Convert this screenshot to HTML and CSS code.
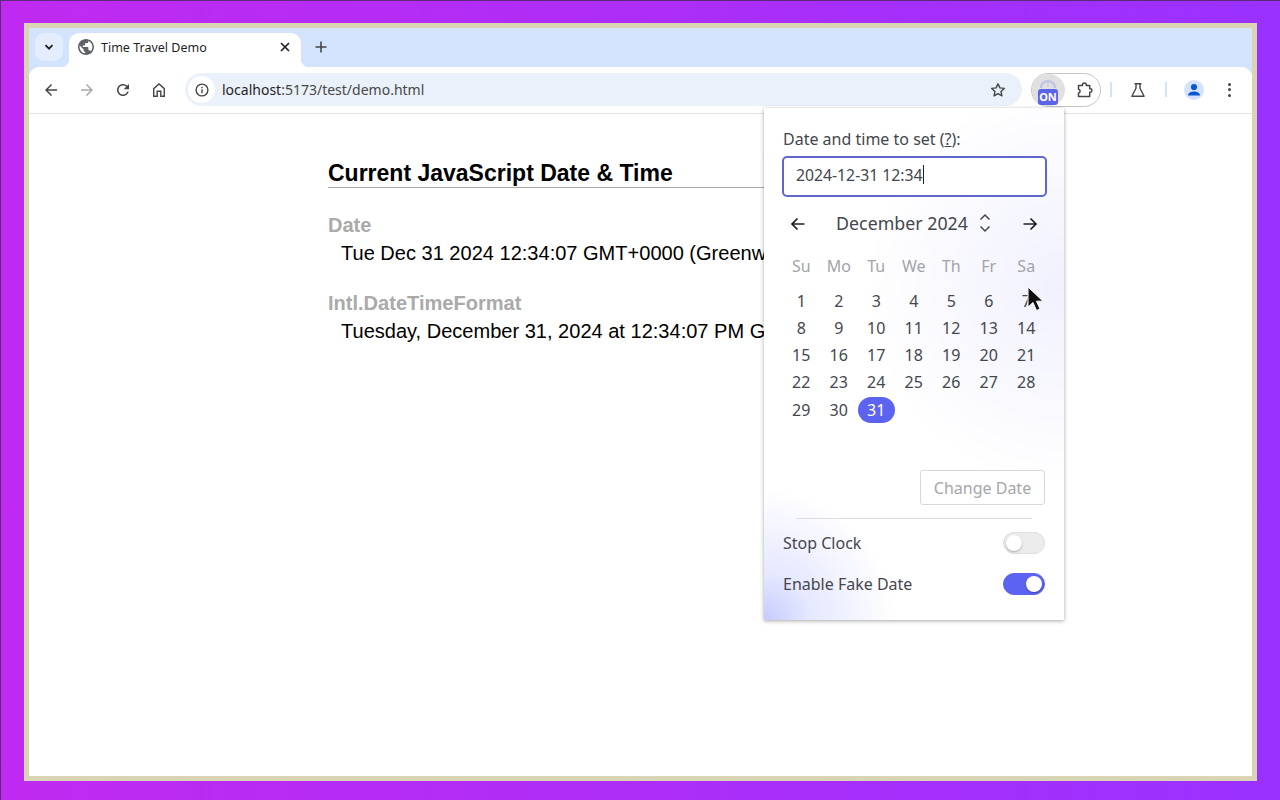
FILE: index.html
```html
<!DOCTYPE html>
<html lang="en">
<head>
    <meta charset="UTF-8">
    <meta name="viewport" content="width=device-width, initial-scale=1.0">
    <title>Time Travel Demo</title>
    <link rel="stylesheet" href="styles.css">
</head>
<body>
    <div class="window">
        <div class="tabstrip">
            <button class="tab-search">
                <svg width="12" height="12" viewBox="0 0 12 12"><path d="M2.5 4.2 6 7.7l3.500-3.500" fill="none" stroke="#1f1f1f" stroke-width="1.800"/></svg>
            </button>
            <div class="tab">
                <svg class="favicon" width="16" height="16" viewBox="2 2 20 20"><path fill="#5f6368" d="M12 2C6.480 2 2 6.480 2 12s4.480 10 10 10 10-4.480 10-10S17.520 2 12 2zm-1 17.930c-3.950-.490-7-3.850-7-7.930 0-.620.080-1.210.210-1.790L9 15v1c0 1.100.900 2 2 2v1.930zm6.900-2.540c-.260-.810-1-1.390-1.900-1.390h-1v-3c0-.550-.450-1-1-1H8v-2h2c.550 0 1-.450 1-1V7h2c1.100 0 2-.900 2-2v-.410c2.930 1.190 5 4.060 5 7.410 0 2.080-.800 3.970-2.100 5.390z"/></svg>
                <span class="tab-title">Time Travel Demo</span>
                <svg class="tab-close" width="10" height="10" viewBox="0 0 10 10"><path d="M1 1l8 8M9 1l-8 8" stroke="#1f1f1f" stroke-width="1.700"/></svg>
            </div>
            <svg class="new-tab" width="12" height="12" viewBox="0 0 12 12"><path d="M6 .500v11M.500 6h11" stroke="#444746" stroke-width="1.600"/></svg>
        </div>

        <div class="toolbar">
            <div class="nav-btn">
                <svg width="18" height="18" viewBox="0 0 24 24"><path fill="#444746" d="M20 11H7.830l5.590-5.590L12 4l-8 8 8 8 1.410-1.410L7.830 13H20v-2z"/></svg>
            </div>
            <div class="nav-btn">
                <svg width="18" height="18" viewBox="0 0 24 24"><path fill="#a8a9aa" d="M4 11h12.170l-5.590-5.590L12 4l8 8-8 8-1.410-1.410L16.170 13H4v-2z"/></svg>
            </div>
            <div class="nav-btn">
                <svg width="18" height="18" viewBox="0 0 24 24"><path fill="#444746" d="M17.650 6.350A7.958 7.958 0 0 0 12 4c-4.420 0-7.990 3.580-7.990 8s3.570 8 7.990 8c3.730 0 6.840-2.550 7.730-6h-2.080A5.990 5.990 0 0 1 12 18c-3.310 0-6-2.690-6-6s2.690-6 6-6c1.660 0 3.140.690 4.220 1.780L13 11h7V4l-2.350 2.350z"/></svg>
            </div>
            <div class="nav-btn">
                <svg width="16" height="16" viewBox="0 0 16 16"><path fill="none" stroke="#444746" stroke-width="1.400" d="M2.700 14.300V6.600L8 2l5.300 4.600v7.700h-3.500V9.200H6.200v5.100z"/></svg>
            </div>

            <div class="omnibox">
                <div class="site-info">
                    <svg width="14" height="14" viewBox="0 0 14 14"><circle cx="7" cy="7" r="5.900" fill="none" stroke="#444746" stroke-width="1.400"/><path d="M7 6.200v4M7 3.800v1.400" stroke="#444746" stroke-width="1.400"/></svg>
                </div>
                <span class="url">localhost<span class="url-path">:5173/test/demo.html</span></span>
                <svg class="star" width="16" height="16" viewBox="0 0 16 16"><path fill="none" stroke="#444746" stroke-width="1.400" stroke-linejoin="round" d="M8 1.800l1.900 4.100 4.400.5-3.300 3 .900 4.500L8 11.700l-3.900 2.200.900-4.500-3.300-3 4.400-.5z"/></svg>
            </div>

            <div class="ext-pill">
                <div class="ext-active">
                    <svg class="ext-clock" width="22" height="22" viewBox="0 0 22 22"><path d="M4 12a7 7 0 0 1 14 0" fill="none" stroke="#bcc0ea" stroke-width="2"/><path d="M11 6v5" stroke="#c4c4cc" stroke-width="1"/></svg>
                    <span class="badge">ON</span>
                </div>
                <svg class="puzzle" width="18" height="18" viewBox="0 0 18 18"><path fill="none" stroke="#444746" stroke-width="1.500" stroke-linejoin="round" d="M2.500 4.500H6.500V3.800a1.900 1.900 0 0 1 3.800 0v.7h3.400v3.300h.6a1.700 1.700 0 0 1 0 3.400h-.6v4.300H2.500v-3.400c2.100-.4 2.100-3.400 0-3.800z"/></svg>
            </div>

            <span class="tool-sep"></span>
            <svg class="flask" width="16" height="16" viewBox="0 0 16 16"><path fill="none" stroke="#444746" stroke-width="1.400" stroke-linejoin="round" d="M4.500 1.700h7M6 1.700v4.500L1.900 14.300h12.200L10 6.200V1.700"/></svg>
            <span class="tool-sep"></span>
            <div class="avatar">
                <svg width="20" height="20" viewBox="0 0 20 20"><circle cx="10" cy="7" r="3.100" fill="#0b57d0"/><path fill="#0b57d0" d="M4 15.500c0-2.800 3.400-4 6-4s6 1.200 6 4z"/></svg>
            </div>
            <div class="kebab"><i></i><i></i><i></i></div>
        </div>

        <main class="page">
            <h2>Current JavaScript Date &amp; Time</h2>
            <h3>Date</h3>
            <div class="value">Tue Dec 31 2024 12:34:07 GMT+0000 (Greenw</div>
            <h3>Intl.DateTimeFormat</h3>
            <div class="value">Tuesday, December 31, 2024 at 12:34:07 PM G</div>
        </main>

        <div class="popup">
            <label class="field-label">Date and time to set (<u>?</u>):</label>
            <div class="date-input">2024-12-31 12:34<span class="caret"></span></div>

            <div class="cal-head">
                <svg width="16" height="16" viewBox="0 0 16 16"><path d="M14.500 8H2M7.500 2.500 2 8l5.500 5.500" fill="none" stroke="#1f2024" stroke-width="1.700"/></svg>
                <div class="cal-title">
                    <span>December 2024</span>
                    <svg width="12" height="22" viewBox="0 0 12 22"><path d="M1.500 7.500 6 3l4.500 4.500M1.500 14.500 6 19l4.500-4.500" fill="none" stroke="#44464d" stroke-width="1.500"/></svg>
                </div>
                <svg width="16" height="16" viewBox="0 0 16 16"><path d="M1.500 8H14M8.500 2.500 14 8l-5.500 5.500" fill="none" stroke="#1f2024" stroke-width="1.700"/></svg>
            </div>

            <div class="weekdays">
                <span>Su</span><span>Mo</span><span>Tu</span><span>We</span><span>Th</span><span>Fr</span><span>Sa</span>
            </div>
            <div class="days">
                <span>1</span><span>2</span><span>3</span><span>4</span><span>5</span><span>6</span><span>7</span>
                <span>8</span><span>9</span><span>10</span><span>11</span><span>12</span><span>13</span><span>14</span>
                <span>15</span><span>16</span><span>17</span><span>18</span><span>19</span><span>20</span><span>21</span>
                <span>22</span><span>23</span><span>24</span><span>25</span><span>26</span><span>27</span><span>28</span>
                <span>29</span><span>30</span><span class="selected">31</span>
            </div>

            <div class="actions">
                <button class="change-btn">Change Date</button>
            </div>
            <hr class="divider">
            <div class="toggle-row">
                <span>Stop Clock</span>
                <span class="toggle"></span>
            </div>
            <div class="toggle-row">
                <span>Enable Fake Date</span>
                <span class="toggle on"></span>
            </div>
        </div>

        <svg class="cursor" width="18" height="28" viewBox="0 0 18 28"><path d="M1 1v20l5-4.500 3.500 8 3.500-1.500-3.500-7.800H16z" fill="#111" stroke="#fff" stroke-width="1"/></svg>
    </div>
</body>
</html>
```

FILE: styles.css
```css
* {
    box-sizing: border-box;
}

html, body {
    height: 100%;
}

body {
    margin: 0;
    padding: 23px 23px 19px 24px;
    background: linear-gradient(90deg, #c02af0, #9a31ff);
    box-shadow: inset 1px 1px 0 #5b2a78;
    overflow: hidden;
    font-family: "Noto Sans", sans-serif;
}

.window {
    position: relative;
    display: flex;
    flex-direction: column;
    height: 100%;
    border: 5px solid #d9d4b4;
    background: #fff;
    overflow: hidden;
}

/* tab strip */
.tabstrip {
    display: flex;
    align-items: flex-start;
    height: 46px;
    margin-bottom: -7px;
    padding: 5px 0 0 6px;
    background: #d3e3fd;
}

.tab-search {
    display: flex;
    align-items: center;
    justify-content: center;
    width: 28px;
    height: 28px;
    padding: 0;
    border: 0;
    border-radius: 9px;
    background: #e3edfd;
}

.tab {
    position: relative;
    z-index: 1;
    display: flex;
    align-items: center;
    width: 232px;
    height: 34px;
    margin-left: 6px;
    padding: 0 11px 6px 9px;
    border-radius: 10px 10px 0 0;
    background: #fff;
}

.tab::before,
.tab::after {
    content: "";
    position: absolute;
    bottom: 0;
    width: 8px;
    height: 8px;
}

.tab::before {
    left: -8px;
    background: radial-gradient(circle at 0 0, transparent 8px, #fff 8.500px);
}

.tab::after {
    right: -8px;
    background: radial-gradient(circle at 100% 0, transparent 8px, #fff 8.500px);
}

.tab-title {
    flex: 1;
    margin-left: 7px;
    font-size: 12.500px;
    color: #1f1f1f;
}

.new-tab {
    margin: 8px 0 0 14px;
}

/* toolbar */
.toolbar {
    position: relative;
    display: flex;
    align-items: center;
    height: 47px;
    padding: 0 0 1px 4px;
    border-bottom: 1px solid #e1e3e6;
    border-radius: 10px 10px 0 0;
    background: #fff;
}

.nav-btn {
    display: flex;
    align-items: center;
    justify-content: center;
    width: 36px;
}

.omnibox {
    display: flex;
    align-items: center;
    width: 837px;
    height: 33px;
    margin-left: 8px;
    padding: 0 16px 0 3px;
    border-radius: 17px;
    background: #ebf1fa;
}

.site-info {
    display: flex;
    align-items: center;
    justify-content: center;
    width: 27px;
    height: 27px;
    border-radius: 50%;
    background: #fff;
}

.url {
    flex: 1;
    margin-left: 7px;
    font-size: 14px;
    color: #1f1f1f;
}

.url-path {
    color: #474747;
}

.ext-pill {
    display: flex;
    align-items: center;
    width: 70px;
    height: 34px;
    margin-left: 9px;
    border: 1px solid #c4c7c5;
    border-radius: 17px;
}

.ext-active {
    position: relative;
    width: 33px;
    height: 32px;
    border-radius: 50%;
    background: #e0e0e0;
}

.ext-clock {
    position: absolute;
    top: 2px;
    left: 5px;
}

.badge {
    position: absolute;
    left: 6px;
    top: 15px;
    width: 20px;
    height: 16px;
    border-radius: 3px;
    background: #5b63e8;
    color: #fff;
    font-size: 11px;
    font-weight: 700;
    line-height: 16px;
    text-align: center;
}

.puzzle {
    margin-left: 11px;
}

.tool-sep {
    width: 2px;
    height: 15px;
    margin-left: 9px;
    background: #d3e3fd;
}

.flask {
    margin: 0 10px 0 18px;
}

.avatar {
    display: flex;
    align-items: center;
    justify-content: center;
    width: 20px;
    height: 20px;
    margin-left: 17px;
    border-radius: 50%;
    background: #d3e3fd;
}

.kebab {
    display: flex;
    flex-direction: column;
    gap: 2.500px;
    margin-left: 24px;
}

.kebab i {
    width: 3px;
    height: 3px;
    border-radius: 50%;
    background: #444746;
}

/* demo page */
.page {
    flex: 1;
    width: 625px;
    margin-left: 299px;
    padding-top: 45px;
    font-family: "Liberation Sans", Arial, sans-serif;
    color: #000;
}

.page h2 {
    margin: 0 0 25px;
    border-bottom: 1px solid #aaa;
    font-size: 23px;
    line-height: 28px;
}

.page h3 {
    margin: 0;
    font-size: 20.050px;
    line-height: 24px;
    color: #aaa;
}

.value {
    margin: 4px 0 26px;
    padding-left: 13px;
    font-size: 20.050px;
    line-height: 24px;
    white-space: nowrap;
}

/* extension popup */
.popup {
    position: absolute;
    top: 80px;
    left: 735px;
    width: 300px;
    height: 512px;
    padding: 21px 19px 0;
    background:
        radial-gradient(circle at 0 100%, #c5cbff 0, rgba(197, 203, 255, 0.45) 45px, rgba(197, 203, 255, 0) 130px),
        radial-gradient(circle at 100% 35%, #f0f1fd 0, rgba(240, 241, 253, 0) 200px),
        #fff;
    box-shadow: 0 1px 4px rgba(0, 0, 0, 0.35);
    color: #44464d;
    font-size: 16px;
}

.field-label {
    display: block;
    line-height: 20px;
}

.date-input {
    display: flex;
    align-items: center;
    width: 265px;
    height: 41px;
    margin-top: 7px;
    margin-left: -1px;
    padding: 0 0 4px 12px;
    border: 2px solid #5f67c9;
    border-radius: 5px;
    background: #fff;
    font-size: 15.750px;
}

.caret {
    width: 1px;
    height: 19px;
    background: #222;
}

.cal-head {
    display: flex;
    align-items: center;
    justify-content: space-between;
    height: 28px;
    margin-top: 13px;
    padding: 0 7px;
}

.cal-title {
    display: flex;
    align-items: center;
    gap: 11px;
    margin-right: 1px;
    padding-bottom: 2px;
    font-size: 17.800px;
}

.weekdays,
.days {
    display: grid;
    grid-template-columns: repeat(7, 37.500px);
    margin-left: -0.500px;
    text-align: center;
}

.weekdays {
    margin-top: 16px;
    color: #a3a3a8;
    line-height: 24px;
}

.days {
    grid-template-rows: 27px 27px 27px 28px 27px;
    margin-top: 10px;
    line-height: 27px;
}

.days .selected {
    height: 26px;
    border-radius: 13px;
    background: #5b63f0;
    color: #fff;
    line-height: 26px;
}

.actions {
    display: flex;
    justify-content: flex-end;
    margin-top: 46px;
}

.change-btn {
    width: 125px;
    height: 35px;
    padding: 0;
    border: 1px solid #d8d8dc;
    border-radius: 3px;
    background: #fff;
    color: #a6a6aa;
    font: 16px "Noto Sans", sans-serif;
}

.divider {
    width: 236px;
    height: 1px;
    margin: 13px auto 0;
    border: 0;
    background: #dcdce2;
}

.toggle-row {
    display: flex;
    align-items: center;
    justify-content: space-between;
    width: 262px;
    height: 22px;
    margin-top: 19px;
}

.divider + .toggle-row {
    margin-top: 13px;
}

.toggle {
    position: relative;
    width: 42px;
    height: 22px;
    border: 1px solid #ddd;
    border-radius: 11px;
    background: #ececec;
}

.toggle::after {
    content: "";
    position: absolute;
    top: 2px;
    left: 2px;
    width: 16px;
    height: 16px;
    border-radius: 50%;
    background: #fff;
    box-shadow: 0 1px 2px rgba(0, 0, 0, 0.3);
}

.toggle.on {
    border-color: #5b63f0;
    background: #5b63f0;
}

.toggle.on::after {
    left: 22px;
}

.cursor {
    position: absolute;
    top: 258px;
    left: 998px;
}
```
